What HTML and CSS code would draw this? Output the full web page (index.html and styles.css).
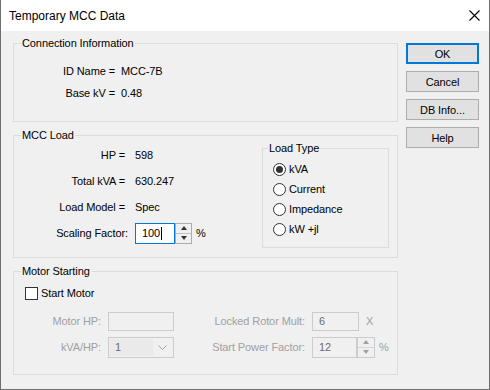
FILE: index.html
```html
<!DOCTYPE html>
<html lang="en">
<head>
    <meta charset="UTF-8">
    <title>Temporary MCC Data</title>
    <link rel="stylesheet" href="styles.css">
</head>
<body>
    <div class="window">
        <div class="titlebar">
            <span class="title">Temporary MCC Data</span>
            <svg class="close" width="11" height="11" viewBox="0 0 11 11">
                <path d="M0.5 0.5 L10.5 10.5 M10.5 0.5 L0.5 10.5" stroke="#000" stroke-width="1.1" fill="none"/>
            </svg>
        </div>

        <div class="client">
            <div class="main">
                <!-- connection -->
                <fieldset class="group conn">
                    <legend>Connection Information</legend>
                    <div class="info-grid">
                        <span class="lbl">ID Name =</span><span>MCC-7B</span>
                        <span class="lbl">Base kV =</span><span>0.48</span>
                    </div>
                </fieldset>

                <!-- load -->
                <fieldset class="group load">
                    <legend>MCC Load</legend>
                    <div class="load-body">
                        <div class="load-grid">
                            <span class="lbl eq">HP =</span><span>598</span>
                            <span class="lbl eq">Total kVA =</span><span>630.247</span>
                            <span class="lbl eq">Load Model =</span><span>Spec</span>
                            <span class="lbl">Scaling Factor:</span>
                            <span class="unit-row">
                                <span class="spin">
                                    <span class="spin-field focus">100<i class="caret"></i></span>
                                    <span class="spin-btns"><span class="up"></span><span class="down"></span></span>
                                </span>
                                <span class="unit">%</span>
                            </span>
                        </div>

                        <fieldset class="group load-type">
                            <legend>Load Type</legend>
                            <label class="radio"><span class="dot on"></span>kVA</label>
                            <label class="radio"><span class="dot"></span>Current</label>
                            <label class="radio"><span class="dot"></span>Impedance</label>
                            <label class="radio"><span class="dot"></span>kW +jl</label>
                        </fieldset>
                    </div>
                </fieldset>

                <!-- motor starting -->
                <fieldset class="group motor">
                    <legend>Motor Starting</legend>
                    <label class="check-row"><span class="box"></span>Start Motor</label>
                    <div class="motor-grid">
                        <span class="lbl off">Motor HP:</span>
                        <span class="field wide"></span>
                        <span class="lbl off">Locked Rotor Mult:</span>
                        <span class="unit-row">
                            <span class="field mid">6</span>
                            <span class="unit off x">X</span>
                        </span>

                        <span class="lbl off">kVA/HP:</span>
                        <span class="combo">
                            <span class="combo-val">1</span>
                            <svg class="chev" width="9" height="5" viewBox="0 0 9 5">
                                <path d="M0.5 0.5 L4.5 4.5 L8.5 0.5" stroke="#a0a0a0" fill="none"/>
                            </svg>
                        </span>
                        <span class="lbl off">Start Power Factor:</span>
                        <span class="unit-row">
                            <span class="spin">
                                <span class="spin-field pf">12</span>
                                <span class="spin-btns pf-btns"><span class="up"></span><span class="down"></span></span>
                            </span>
                            <span class="unit off">%</span>
                        </span>
                    </div>
                </fieldset>
            </div>

            <div class="buttons">
                <button class="btn btn-default">OK</button>
                <button class="btn">Cancel</button>
                <button class="btn">DB Info...</button>
                <button class="btn">Help</button>
            </div>
        </div>
    </div>
</body>
</html>
```

FILE: styles.css
```css
* { margin: 0; padding: 0; box-sizing: border-box; }
body { font-family: "Liberation Sans", Arial, sans-serif; font-size: 11px; letter-spacing: -0.1px; color: #000; background: #fff; }

.window { width: 490px; height: 390px; border: 1px solid #6e6e6e; border-top: 0; background: #f0f0f0; display: flex; flex-direction: column; }
.titlebar { height: 31px; background: #fff; display: flex; align-items: center; justify-content: space-between; padding: 0 9px 0 8px; font-size: 12px; letter-spacing: 0; }
.close { display: block; }

.client { flex: 1; display: flex; gap: 8px; padding: 6px 9px 0 12px; }
.main { width: 385px; display: flex; flex-direction: column; gap: 7px; }

.group { border: 1px solid #dcdcdc; min-width: 0; }
.group legend { margin-left: 7px; padding: 0 1px; line-height: 13px; }

.lbl { justify-self: end; white-space: nowrap; }
.lbl.eq { padding-right: 3px; }
.off { color: #a0a0a0; }

.info-grid { display: grid; grid-template-columns: 101px auto; column-gap: 6px; grid-auto-rows: 22px; align-items: center; padding: 10px 0 17px; }

.load-body { display: flex; justify-content: space-between; align-items: flex-start; padding: 0 8px 9px 0; }
.load-grid { display: grid; grid-template-columns: 114px auto; column-gap: 7px; grid-auto-rows: 26px; align-items: center; }

.unit-row { display: flex; align-items: center; }
.unit { margin-left: 4px; }
.unit.x { margin-left: 7px; }

.spin { display: flex; height: 21px; }
.spin-field { width: 40px; border: 1px solid #0078d7; background: #fff; display: flex; align-items: center; padding-left: 6px; }
.caret { display: inline-block; width: 1px; height: 13px; background: #000; margin-left: 1px; }
.spin-btns { width: 17px; border: 1px solid #adadad; background: #f0f0f0; display: flex; flex-direction: column; }
.spin-btns span { flex: 1; display: flex; align-items: center; justify-content: center; }
.spin-btns .down { border-top: 1px solid #c4c4c4; }
.spin-btns .up::after { content: ""; border: 3px solid transparent; border-top: 0; border-bottom: 4px solid #333; }
.spin-btns .down::after { content: ""; border: 3px solid transparent; border-bottom: 0; border-top: 4px solid #333; }

.spin-field.pf { width: 45px; border-color: #cccccc; background: #f0f0f0; color: #6d6d6d; }
.pf-btns { width: 18px; border-color: #cccccc; }
.pf-btns .down { border-top-color: #d6d6d6; }
.pf-btns .up::after { border-bottom-color: #a0a0a0; }
.pf-btns .down::after { border-top-color: #a0a0a0; }

.load-type { width: 127px; padding: 4px 0 8px; }
.load-type legend { margin-left: 5px; }
.radio { display: flex; align-items: center; gap: 3px; height: 20px; padding-left: 10px; }
.dot { width: 13px; height: 13px; border: 1px solid #333; border-radius: 50%; background: #fff; display: flex; align-items: center; justify-content: center; }
.dot.on::after { content: ""; width: 7px; height: 7px; border-radius: 50%; background: #333; }

.motor { padding: 5px 0 17px; }
.check-row { display: flex; align-items: center; gap: 3px; height: 20px; padding-left: 11px; }
.box { width: 13px; height: 13px; border: 1px solid #333; background: #fff; }

.motor-grid { display: grid; grid-template-columns: 87px 66px 124px auto; column-gap: 7px; row-gap: 6px; grid-auto-rows: 20px; align-items: center; margin-top: 8px; }
.field { height: 19px; border: 1px solid #cccccc; background: #f0f0f0; color: #6d6d6d; display: flex; align-items: center; padding-left: 6px; }
.field.wide { width: 66px; }
.field.mid { width: 47px; }

.combo { width: 66px; height: 21px; border: 1px solid #cccccc; background: #f0f0f0; display: flex; align-items: center; justify-content: space-between; padding: 1px 6px 1px 1px; }
.combo-val { width: 43px; height: 100%; background: #eaeaea; color: #6d6d6d; display: flex; align-items: center; padding-left: 5px; }
.chev { display: block; }

.buttons { width: 73px; display: flex; flex-direction: column; gap: 7px; padding-top: 6px; }
.btn { height: 21px; border: 1px solid #adadad; background: #e1e1e1; font-family: inherit; font-size: 11px; letter-spacing: -0.1px; color: #000; }
.btn-default { border: 2px solid #0078d7; }
```
